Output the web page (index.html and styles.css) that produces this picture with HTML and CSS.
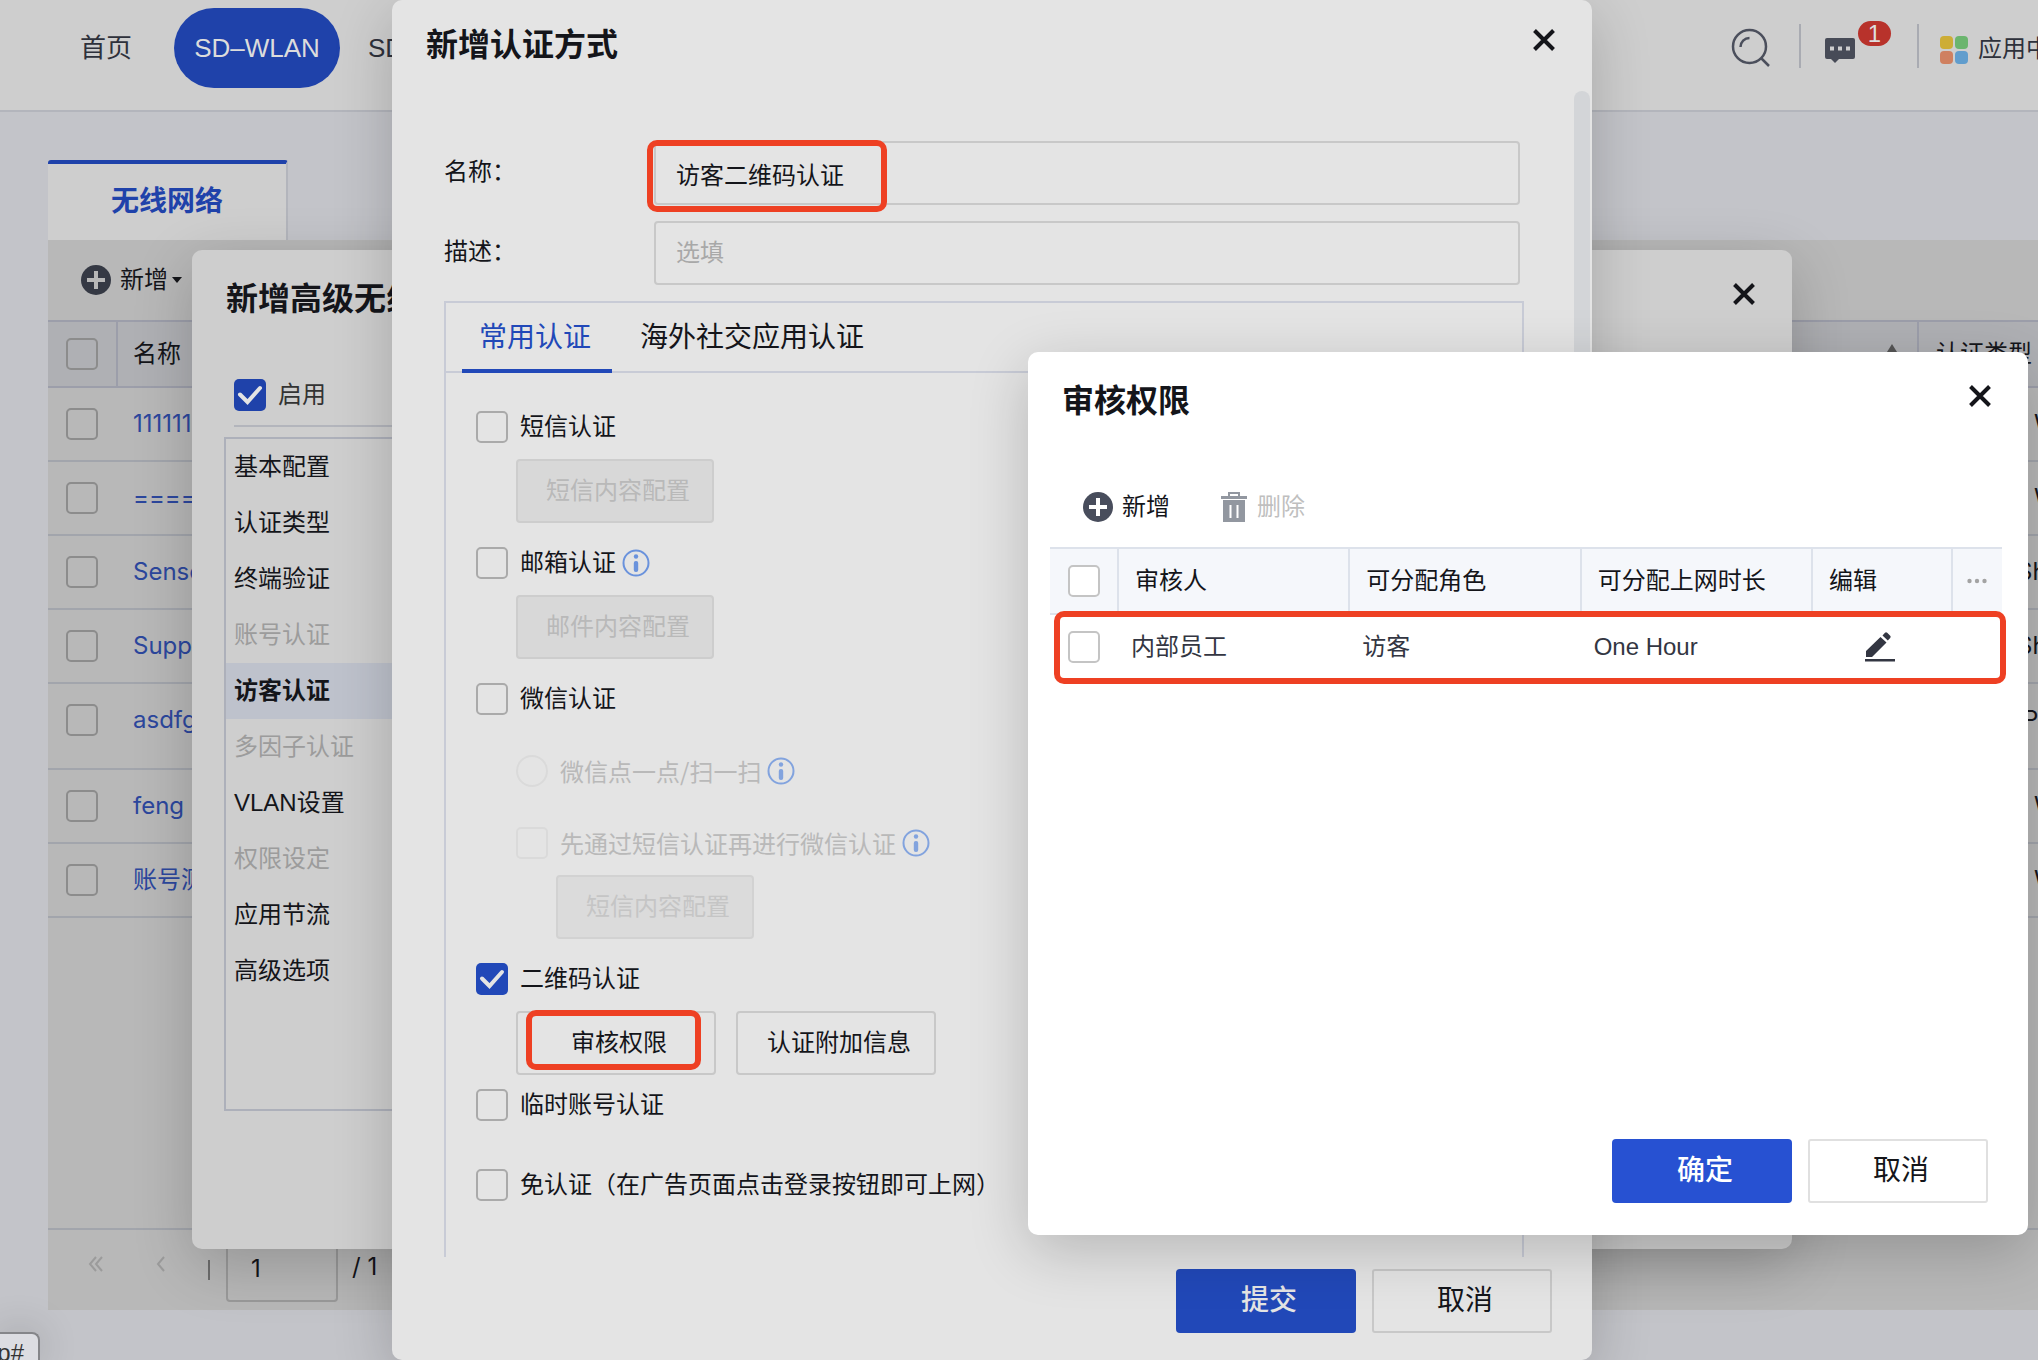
FILE: index.html
```html
<!DOCTYPE html>
<html lang="zh-CN">
<head>
<meta charset="utf-8">
<title>无线网络</title>
<link rel="stylesheet" href="styles.css">
</head>
<body>
<svg class="defs" aria-hidden="true">
  <symbol id="i-close" viewBox="0 0 24 24"><path d="M2.500 2.500 21.500 21.500M21.500 2.500 2.500 21.500" fill="none" stroke="currentColor" stroke-width="4"/></symbol>
  <symbol id="i-plus" viewBox="0 0 30 30"><circle cx="15" cy="15" r="15" fill="currentColor"/><path d="M15 6v18M6 15h18" stroke="var(--cut)" stroke-width="4"/></symbol>
  <symbol id="i-info" viewBox="0 0 28 28"><circle cx="14" cy="14" r="12.500" fill="none" stroke="currentColor" stroke-width="2"/><circle cx="14" cy="7.500" r="2.200" fill="currentColor"/><rect x="11.800" y="12" width="4.400" height="11" rx="2" fill="currentColor"/></symbol>
</svg>

<header class="topbar">
  <nav class="nav">
    <a class="nav-link" href="#">首页</a>
    <a class="nav-link active" href="#">SD–WLAN</a>
    <a class="nav-link" href="#">SD</a>
  </nav>
  <div class="tools">
    <button class="plain" aria-label="搜索"><svg width="40" height="40" viewBox="0 0 40 40" fill="none" stroke="#4b4f5c" stroke-width="2.500"><circle cx="18.500" cy="18.500" r="16.500"/><path d="M9.500 19a9 9 0 0 1 9-9M30 30l8 8"/></svg></button>
    <button class="plain msg" aria-label="消息"><svg width="30" height="26" viewBox="0 0 30 26"><path d="M2 0h26a2 2 0 0 1 2 2v17a2 2 0 0 1-2 2H14l-4 4-4-4H2a2 2 0 0 1-2-2V2a2 2 0 0 1 2-2z" fill="#474b57"/><path d="M5 8.500h4v4H5zM13 8.500h4v4h-4zM21 8.500h4v4h-4z" fill="#cecece"/></svg><span class="badge">1</span></button>
    <a class="apps" href="#"><svg width="30" height="30" viewBox="0 0 30 30"><rect x="1" y="1" width="13" height="13" rx="4" fill="#cdad36"/><rect x="16" y="1" width="13" height="13" rx="4" fill="#6bb56e"/><rect x="1" y="16" width="13" height="13" rx="4" fill="#cf8060"/><rect x="16" y="16" width="13" height="13" rx="4" fill="#619dcd"/></svg>应用中</a>
  </div>
</header>

<main class="page">
  <div class="page-tab">无线网络</div>
  <section class="panel">
    <div class="toolbar">
      <button class="tool"><svg class="plus" width="30" height="30"><use href="#i-plus"/></svg>新增<span class="caret"></span></button>
    </div>
    <table class="list">
      <thead><tr><th class="c-check"><input type="checkbox" aria-label="全选"></th><th class="c-name"><div class="sort">名称<span class="arrow"></span></div></th><th class="c-type">认证类型</th></tr></thead>
      <tbody>
        <tr><td class="c-check"><input type="checkbox" aria-label="选择"></td><td class="c-name"><a href="#">1111111</a></td><td class="c-type w">W</td></tr>
        <tr><td class="c-check"><input type="checkbox" aria-label="选择"></td><td class="c-name"><a href="#">=====</a></td><td class="c-type w">W</td></tr>
        <tr><td class="c-check"><input type="checkbox" aria-label="选择"></td><td class="c-name"><a href="#">Senso</a></td><td class="c-type s">Sh</td></tr>
        <tr><td class="c-check"><input type="checkbox" aria-label="选择"></td><td class="c-name"><a href="#">Suppo</a></td><td class="c-type s">Sh</td></tr>
        <tr class="tall"><td class="c-check"><input type="checkbox" aria-label="选择"></td><td class="c-name"><a href="#">asdfg</a></td><td class="c-type p">P/</td></tr>
        <tr><td class="c-check"><input type="checkbox" aria-label="选择"></td><td class="c-name"><a href="#">feng</a></td><td class="c-type w">W</td></tr>
        <tr><td class="c-check"><input type="checkbox" aria-label="选择"></td><td class="c-name"><a href="#">账号测</a></td><td class="c-type w">W</td></tr>
      </tbody>
    </table>
    <div class="pager">
      <button class="plain" disabled aria-label="首页"><svg width="16" height="16" viewBox="0 0 16 16" fill="none" stroke="#9b9b9b" stroke-width="2"><path d="M8 1 2 8l6 7M14 1 8 8l6 7"/></svg></button>
      <button class="plain" disabled aria-label="上一页"><svg width="10" height="16" viewBox="0 0 10 16" fill="none" stroke="#9b9b9b" stroke-width="2"><path d="M8 1 2 8l6 7"/></svg></button>
      <span class="bar"></span>
      <input class="page-no" type="text" value="1" aria-label="页码">
      <span class="total">/ 1</span>
    </div>
  </section>
</main>

<section class="dialog dlg-wlan" role="dialog" aria-label="新增高级无线">
  <header class="dlg-head"><h2>新增高级无线</h2><button class="plain" aria-label="关闭"><svg width="24" height="24"><use href="#i-close"/></svg></button></header>
  <div class="wlan-body">
    <label class="enable"><input type="checkbox" checked>启用</label>
    <ul class="menu">
      <li>基本配置</li><li>认证类型</li><li>终端验证</li><li class="off">账号认证</li><li class="on">访客认证</li><li class="off">多因子认证</li><li>VLAN设置</li><li class="off">权限设定</li><li>应用节流</li><li>高级选项</li>
    </ul>
  </div>
</section>

<section class="dialog dlg-auth" role="dialog" aria-label="新增认证方式">
  <header class="dlg-head"><h2>新增认证方式</h2><button class="plain" aria-label="关闭"><svg width="24" height="24"><use href="#i-close"/></svg></button></header>
  <div class="auth-body">
    <div class="field"><label for="f-name">名称：</label><div class="marked"><input id="f-name" type="text" value="访客二维码认证"><span class="mark mark-name"></span></div></div>
    <div class="field"><label for="f-desc">描述：</label><div class="marked"><input id="f-desc" type="text" placeholder="选填"></div></div>
    <div class="tabbox">
      <div class="tabs"><button class="tab on">常用认证</button><button class="tab">海外社交应用认证</button></div>
      <div class="methods">
        <div class="method"><label class="opt"><input type="checkbox">短信认证</label><button class="btn-cfg in1" disabled>短信内容配置</button></div>
        <div class="method"><label class="opt"><input type="checkbox">邮箱认证<svg class="info" width="28" height="28"><use href="#i-info"/></svg></label><button class="btn-cfg in1" disabled>邮件内容配置</button></div>
        <div class="method wechat">
          <label class="opt"><input type="checkbox">微信认证</label>
          <label class="opt in1 dim"><input type="radio" disabled>微信点一点/扫一扫<svg class="info" width="28" height="28"><use href="#i-info"/></svg></label>
          <div class="method in1"><label class="opt dim"><input type="checkbox" disabled>先通过短信认证再进行微信认证<svg class="info" width="28" height="28"><use href="#i-info"/></svg></label><button class="btn-cfg in1 faint" disabled>短信内容配置</button></div>
        </div>
        <div class="method qr"><label class="opt"><input type="checkbox" checked>二维码认证</label>
          <div class="pair in1"><div class="marked"><button class="btn-line">审核权限</button><span class="mark mark-review"></span></div><button class="btn-line">认证附加信息</button></div></div>
        <label class="opt temp"><input type="checkbox">临时账号认证</label>
        <label class="opt"><input type="checkbox">免认证（在广告页面点击登录按钮即可上网）</label>
      </div>
    </div>
    <span class="thumb"></span>
  </div>
  <footer class="dlg-foot"><button class="btn primary">提交</button><button class="btn">取消</button></footer>
</section>

<section class="dialog dlg-review" role="dialog" aria-label="审核权限">
  <header class="dlg-head"><h2>审核权限</h2><button class="plain" aria-label="关闭"><svg width="24" height="24"><use href="#i-close"/></svg></button></header>
  <div class="review-body">
    <div class="review-tools">
      <button class="tool"><svg class="plus" width="30" height="30"><use href="#i-plus"/></svg>新增</button>
      <button class="tool" disabled><svg width="28" height="32" viewBox="0 0 28 32"><path d="M8 1h12v4h7v3H1V5h7zM10 3v2h8V3z" fill="#9297a0" fill-rule="evenodd"/><path d="M3 9h22v22H3z" fill="#9297a0"/><path d="M10.500 14v13M17.500 14v13" stroke="#fff" stroke-width="2"/></svg>删除</button>
    </div>
    <div class="marked">
    <table class="review">
      <thead><tr><th class="r-check"><input type="checkbox" aria-label="全选"></th><th>审核人</th><th>可分配角色</th><th>可分配上网时长</th><th class="r-edit">编辑</th><th class="r-more"><svg width="20" height="6" viewBox="0 0 20 6" fill="#a3a3a3"><circle cx="2.500" cy="3" r="2.200"/><circle cx="10" cy="3" r="2.200"/><circle cx="17.500" cy="3" r="2.200"/></svg></th></tr></thead>
      <tbody><tr><td class="r-check"><input type="checkbox" aria-label="选择"></td><td>内部员工</td><td>访客</td><td>One Hour</td><td class="r-edit"><button class="plain" aria-label="编辑"><svg width="32" height="32" viewBox="0 0 32 32" fill="#333642"><path d="M2 26v-6L16.500 6l6 5.500L8 26zM18.500 4.500l2.500-2.800q1-1 2.200 0l3 3q1 1 0 2.200l-2.400 2.600zM1 28h30v2.500H1z"/></svg></button></td><td class="r-more"></td></tr></tbody>
    </table>
    <span class="mark mark-row"></span>
    </div>
  </div>
  <footer class="dlg-foot"><button class="btn primary">确定</button><button class="btn">取消</button></footer>
</section>

<div class="status">p#</div>
</body>
</html>
```
FILE: styles.css
```css
:root {
  --blue: #1f42aa;
  --line: #a2a5ac;
  --ink: #14151a;
  --cut: #b8b8b8;
}
* { box-sizing: border-box; }
body {
  margin: 0;
  min-height: 100vh;
  height: 100vh;
  overflow: hidden;
  position: relative;
  background: #c3c4c9;
  color: var(--ink);
  font: 24px/32px "Liberation Sans", "Noto Sans CJK SC", sans-serif;
}
button, input { font: inherit; color: inherit; }
button { padding: 0; border: 0; background: none; }
a { color: inherit; text-decoration: none; }
h2, ul { margin: 0; padding: 0; }
svg { display: block; flex: none; }
.defs { position: absolute; width: 0; height: 0; }
.plain { display: flex; }
.plus { color: #484d5c; }

/* check boxes and radios */
input[type="checkbox"], input[type="radio"] {
  appearance: none;
  display: block;
  flex: none;
  width: 32px;
  height: 32px;
  margin: 0;
  border: 2px solid #aaa;
  border-radius: 5px;
}
input[type="radio"] { border-radius: 50%; }
input[type="checkbox"]:disabled, input[type="radio"]:disabled { border-color: #dadada; }
input[type="checkbox"]:checked {
  border: 0;
  background: #2148b8 url("data:image/svg+xml,%3Csvg xmlns='http://www.w3.org/2000/svg' viewBox='0 0 32 32'%3E%3Cpath d='M6 15.500 13.500 23 26 9' fill='none' stroke='%23e4e4e4' stroke-width='4' stroke-linecap='round'/%3E%3C/svg%3E");
}

/* top bar */
.topbar {
  display: flex;
  justify-content: space-between;
  height: 112px;
  padding: 8px 0 0 62px;
  border-bottom: 2px solid #b3b5bc;
  background: #cecece;
  color: #2e313b;
}
.nav { display: flex; gap: 10px; font-size: 26px; line-height: 80px; }
.nav-link { height: 80px; padding: 0 18px; border-radius: 40px; white-space: nowrap; }
.nav-link.active { width: 166px; margin-left: 14px; padding: 0; text-align: center; background: var(--blue); color: #dcdcdc; }
.tools { display: flex; align-items: flex-start; padding-top: 16px; line-height: 44px; }
.tools svg { margin-top: 4px; }
.msg { width: 120px; height: 44px; margin-left: 28px; padding-left: 24px; border: solid #a9abb2; border-width: 0 2px; position: relative; }
.msg svg { margin-top: 14px; }
.badge { position: absolute; left: 57px; top: -3px; width: 33px; height: 25px; border-radius: 13px; background: #b8322b; color: #dedede; line-height: 25px; text-align: center; }
.apps { display: flex; gap: 9px; width: 119px; padding-left: 20px; white-space: nowrap; overflow: hidden; font-family: "Noto Sans CJK SC", sans-serif; line-height: 46px; }
.apps svg { margin-top: 11px; }

/* background list */
.page { padding: 48px 0 0 48px; }
.page-tab {
  width: 240px;
  height: 80px;
  border-top: 4px solid var(--blue);
  border-right: 2px solid #b3b5bc;
  border-radius: 3px 3px 0 0;
  background: #cecece;
  color: var(--blue);
  font-size: 28px;
  font-weight: 700;
  line-height: 76px;
  text-align: center;
}
.panel { display: flex; flex-direction: column; height: calc(100vh - 290px); background: #b8b8b8; }
.panel .plus { color: #353944; }
.toolbar { display: flex; height: 80px; padding-left: 33px; flex: none; }
.tool { display: flex; align-items: center; gap: 9px; }
.caret { border: solid transparent; border-width: 6px 5px 0; border-top-color: #14151a; margin-left: -5px; }
.list { width: 100%; table-layout: fixed; border-spacing: 0; font-family: Inter, "Noto Sans CJK SC", sans-serif; }
.list th, .list td { height: 74px; padding: 20px 0 0; border-bottom: 2px solid var(--line); vertical-align: top; text-align: left; font-weight: 400; white-space: nowrap; overflow: hidden; }
.list th { height: 68px; padding-top: 16px; border-top: 2px solid #9c9eaa; border-right: 2px solid #9c9eaa; border-bottom-color: #9c9eaa; background: #afb0b4; }
.list .tall td { height: 86px; }
.list input { border-color: #8c8c8c; }
.list .c-check { width: 70px; padding-left: 18px; }
.list .c-name { padding-left: 15px; }
.list a { color: #2c479d; }
.list .c-type { width: 119px; padding-left: 17px; border-right: 0; }
.list .c-type.w { padding-left: 115px; }
.list .c-type.s { padding-left: 98px; }
.list .c-type.p { padding-left: 104px; }
.sort { display: flex; align-items: center; justify-content: space-between; padding-right: 15px; }
.arrow { border: solid transparent; border-width: 0 10px 16px; border-bottom-color: #555; margin-bottom: 4px; }
.pager { display: flex; align-items: center; margin-top: auto; height: 82px; padding-left: 40px; border-top: 2px solid var(--line); font-family: Inter, sans-serif; }
.pager .plain { margin-bottom: 12px; }
.pager .plain + .plain { margin-left: 52px; }
.bar { width: 2px; height: 20px; margin: 0 16px 0 42px; background: #6d6d6d; }
.page-no { width: 112px; height: 64px; margin-right: 14px; padding: 0 23px 4px; border: 2px solid #9a9a9a; border-radius: 4px; background: none; }
.total { margin-bottom: 6px; }

/* dialogs */
.dialog { position: absolute; display: flex; flex-direction: column; border-radius: 10px; box-shadow: 0 16px 60px rgba(0, 0, 0, .2); }
.dlg-head { display: flex; justify-content: space-between; align-items: flex-start; flex: none; height: 90px; padding: 25px 36px 0 34px; }
.dlg-head h2 { font-size: 32px; line-height: 40px; font-weight: 700; white-space: nowrap; }
.dlg-head .plain { margin-top: 3px; }
.dlg-foot { display: flex; justify-content: flex-end; gap: 16px; flex: none; padding: 12px 40px 27px; }
.btn { width: 180px; height: 64px; padding-left: 6px; border: 2px solid #c8c8c8; border-radius: 3px; font-size: 28px; }
.btn.primary { border: 0; border-radius: 4px; background: #2148b8; color: #e4e4e4; font-weight: 500; }

.dlg-wlan { left: 192px; top: 250px; width: 1600px; height: 999px; background: #cecece; }
.dlg-wlan .dlg-head { padding-top: 29px; }
.wlan-body { padding: 39px 32px 0; }
.enable { display: flex; gap: 12px; margin-left: 10px; padding-bottom: 14px; border-bottom: 2px solid #b3b5bc; color: #333; }
.enable input:checked { background-color: var(--blue); }
.menu { height: 674px; margin-top: 10px; border: 2px solid #adb0ba; list-style: none; line-height: 56px; }
.menu li { padding-left: 8px; }
.menu .off { color: #9c9c9c; }
.menu .on { background: #bec2cc; font-weight: 700; }

.dlg-auth { left: 392px; top: 0; bottom: 0; width: 1200px; background: #e4e4e4; }
.auth-body { display: flex; flex-direction: column; flex: 1; min-height: 0; overflow: hidden; position: relative; padding: 51px 68px 0 52px; }
.field { display: flex; flex: none; height: 64px; margin: 0 4px 16px 0; line-height: 62px; }
.field > label { width: 210px; }
.marked { position: relative; }
.field .marked { flex: 1; }
.field input { display: block; width: 100%; height: 64px; padding: 0 20px; border: 2px solid #c8c8c8; border-radius: 4px; background: none; }
.field input::placeholder { color: #a8a8a8; opacity: 1; }
.mark { position: absolute; border: 6px solid #ee4023; border-radius: 10px; pointer-events: none; }
.mark-name { left: -7px; top: -1px; width: 240px; height: 72px; }
.mark-review { left: 10px; top: -1px; width: 175px; height: 60px; }
.mark-row { left: 4px; right: -4px; bottom: -5px; height: 73px; }
.tabbox { flex: 1; border: 2px solid #c8cbd6; border-bottom: 0; }
.tabs { display: flex; gap: 9px; height: 70px; padding-left: 16px; border-bottom: 2px solid #c8cbd6; }
.tab { height: 70px; padding: 0 19px; font-size: 28px; }
.tab.on { padding: 4px 21px 0 17px; border-bottom: 4px solid #2148b8; color: #2148b8; }
.methods { display: flex; flex-direction: column; gap: 24px; padding: 38px 30px 0; }
.method { display: flex; flex-direction: column; align-items: flex-start; gap: 16px; }
.wechat { gap: 40px; }
.opt { display: flex; align-items: center; gap: 12px; height: 32px; line-height: 32px; white-space: nowrap; }
.in1 { margin-left: 40px; }
.dim { color: #b9b9b9; font-family: "Noto Sans CJK SC", sans-serif; }
.info { margin-left: -6px; color: #6a92dc; }
.dim .info { color: #82a3de; }
.btn-cfg, .btn-line { display: block; height: 64px; border: 2px solid #c8c8c8; border-radius: 4px; padding-left: 6px; }
.btn-cfg { width: 198px; background: #d8d8d8; border-color: #cdcdcd; color: #b9b9b9; }
.btn-cfg.faint { background: #dbdbdb; border-color: #d2d2d2; color: #c5c5c5; }
.btn-line { width: 200px; }
.pair { display: flex; gap: 20px; }
.temp { margin: -10px 0 24px; }
.thumb { position: absolute; right: 2px; top: 1px; width: 16px; height: 1120px; border-radius: 8px; background: #d3d5d8; }

.dlg-review { right: 10px; top: 352px; width: 1000px; height: 883px; background: #fff; --cut: #fff; }
.dlg-review .dlg-head { padding-top: 29px; }
.review-body { flex: 1; padding: 0 26px 0 22px; }
.review-tools { display: flex; gap: 50px; height: 105px; padding: 25px 0 0 33px; }
.review-tools .tool:disabled { color: #bfbfbf; }
.review { width: 100%; table-layout: fixed; border-spacing: 0; }
.review th, .review td { height: 64px; padding: 0 0 0 12px; text-align: left; font-weight: 400; white-space: nowrap; }
.review td { color: #333642; }
.review th { height: 68px; padding-left: 16px; border: solid #dde2eb; border-width: 2px 2px 2px 0; background: #f5f7fb; }
.review input { border-color: #c4c4c4; background: #fff; }
.review .r-check { width: 69px; padding-left: 18px; }
.review .r-edit { width: 140px; }
.review td.r-edit { padding-left: 51px; }
.review .r-more { width: 49px; padding-left: 14px; border-right: 0; }
.dlg-review .dlg-foot { padding-bottom: 32px; }
.dlg-review .btn { border-color: #e0e0e0; }
.dlg-review .primary { background: #2751d2; color: #fff; }

/* link preview of the browser */
.status { position: absolute; left: 0; bottom: 0; display: flex; justify-content: flex-end; width: 40px; height: 28px; padding: 3px 14px 0 0; overflow: hidden; border: solid #85868a; border-width: 2px 2px 0 0; border-radius: 0 8px 0 0; background: #dcdde2; color: #333; box-shadow: 0 0 40px rgba(0, 0, 0, .2); }
```
